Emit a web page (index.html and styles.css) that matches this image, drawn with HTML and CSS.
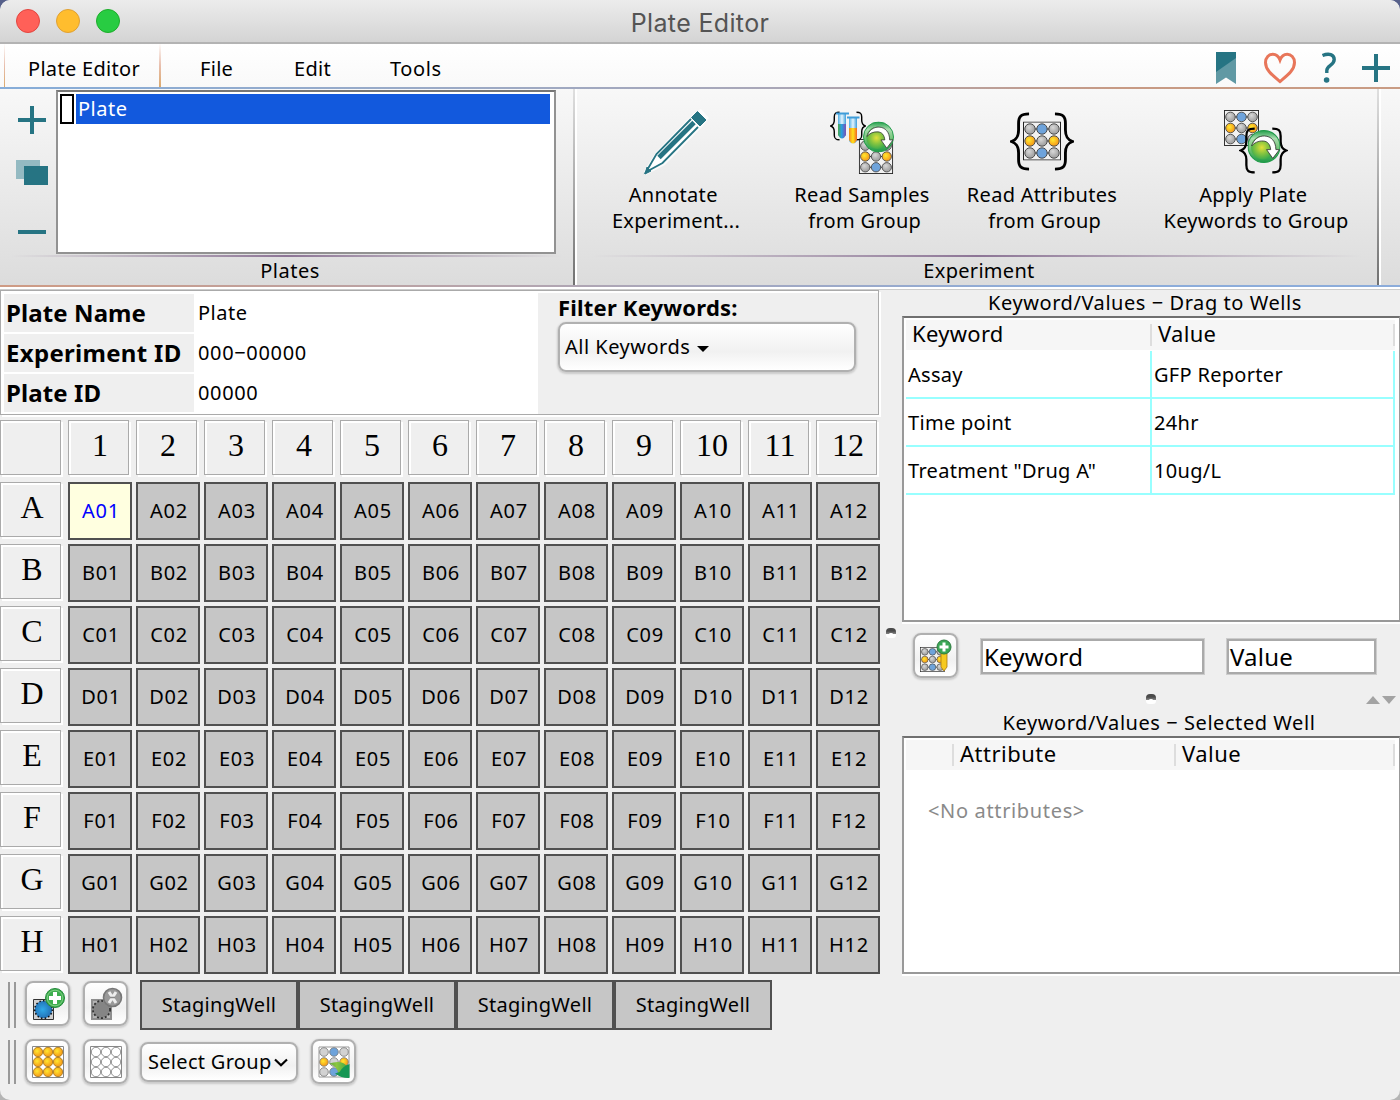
FILE: index.html
```html
<!DOCTYPE html>
<html lang="en">
<head>
<meta charset="utf-8">
<title>Plate Editor</title>
<link rel="stylesheet" href="styles.css">
</head>
<body>
<svg class="defs" width="0" height="0" aria-hidden="true">
  <defs>
    <radialGradient id="grey" cx=".4" cy=".35"><stop offset="0" stop-color="#d8d8d8"/><stop offset="1" stop-color="#a9a9a9"/></radialGradient>
    <radialGradient id="gold" cx=".4" cy=".4"><stop offset="0" stop-color="#ffe92e"/><stop offset="1" stop-color="#f7a41d"/></radialGradient>
    <radialGradient id="green" cx=".45" cy=".5" r=".55"><stop offset="0" stop-color="#e2e03a"/><stop offset=".45" stop-color="#8cc63f"/><stop offset="1" stop-color="#2fa84f"/></radialGradient>
    <linearGradient id="ring" x1="0" y1="0" x2="0" y2="1"><stop offset="0" stop-color="#23a04b"/><stop offset=".25" stop-color="#a9dcae"/><stop offset=".6" stop-color="#6cc070"/><stop offset="1" stop-color="#1f9a48"/></linearGradient>
    <radialGradient id="blue" cx=".45" cy=".5"><stop offset="0" stop-color="#2fa9e8"/><stop offset="1" stop-color="#2473b8"/></radialGradient>
    <linearGradient id="tubeA"><stop offset="0" stop-color="#4aa84e"/><stop offset=".45" stop-color="#2a9fe0"/><stop offset="1" stop-color="#7a4fb5"/></linearGradient>
    <linearGradient id="tubeB"><stop offset="0" stop-color="#f58a1e"/><stop offset=".5" stop-color="#ffe21a"/><stop offset="1" stop-color="#f0641e"/></linearGradient>
    <linearGradient id="glass"><stop offset="0" stop-color="#4fb0e6"/><stop offset=".5" stop-color="#e4f4fd"/><stop offset="1" stop-color="#3d9edb"/></linearGradient>
    <linearGradient id="leaf" x1="0" y1="0" x2="1" y2="0"><stop offset="0" stop-color="#5fa83a"/><stop offset=".4" stop-color="#8cc63f"/><stop offset="1" stop-color="#3fa648"/></linearGradient>
    <symbol id="plate" viewBox="0 0 38 39">
      <rect x=".5" y=".5" width="37" height="38" fill="#f2f2f2" stroke="#222"/>
      <path d="M2 7.500h34M2 19.500h34M2 31.500h34" stroke="#222"/>
      <g stroke="#4a4a4a" stroke-width="1">
        <circle cx="7" cy="7.500" r="5.200" fill="url(#grey)"/><circle cx="19" cy="7.500" r="5.200" fill="#6ea3db"/><circle cx="31" cy="7.500" r="5.200" fill="url(#grey)"/>
        <circle cx="7" cy="19.500" r="5.200" fill="url(#gold)"/><circle cx="19" cy="19.500" r="5.200" fill="url(#grey)"/><circle cx="31" cy="19.500" r="5.200" fill="url(#gold)"/>
        <circle cx="7" cy="31.500" r="5.200" fill="url(#grey)"/><circle cx="19" cy="31.500" r="5.200" fill="#6ea3db"/><circle cx="31" cy="31.500" r="5.200" fill="url(#grey)"/>
      </g>
    </symbol>
    <symbol id="refresh" viewBox="0 0 32 32">
      <circle cx="16" cy="16" r="15.500" fill="url(#ring)" stroke="#1f9a48"/>
      <circle cx="15" cy="17" r="11.500" fill="url(#green)"/>
      <path d="M4 15.500C6 9 11 5.500 16.500 5.800C23 6 27.500 11 27.500 19h3.500l-6.500 8.500l-6-8.500h4C22 14 19.500 11 15.500 10.700C10.500 10.300 6.500 12.500 4 15.500z" fill="#fff" stroke="#333" stroke-width=".8"/>
    </symbol>
    <symbol id="braceL" viewBox="0 0 21 62">
      <path d="M20 2C11 2 9 5 9 12V19C9 26 7 29 1.500 31C7 33 9 36 9 43V50C9 57 11 60 20 60" fill="none" stroke="#000" stroke-width="3"/>
    </symbol>
    <symbol id="plus" viewBox="0 0 28 28"><path d="M14 0V28M0 14H28" stroke="#267483" stroke-width="4"/></symbol>
  </defs>
</svg>

<header class="titlebar">
  <div class="lights"><i class="light red"></i><i class="light amber"></i><i class="light green"></i></div>
  <h1>Plate Editor</h1>
</header>

<nav class="menubar">
  <span class="tab">Plate Editor</span>
  <span class="menu m-file">File</span>
  <span class="menu m-edit">Edit</span>
  <span class="menu m-tools">Tools</span>
  <div class="menu-icons">
    <svg width="22" height="34" viewBox="0 0 22 34"><path d="M1 1H21V33L11 26.500L1 33z" fill="#6099a4"/><path d="M1 1H21V7L1 21z" fill="#267483"/></svg>
    <svg width="34" height="32" viewBox="0 0 34 32"><path d="M17 29.500C9 23 2.500 18 2.500 10.500C2.500 5.500 6 2.300 9.800 2.300C13 2.300 15.500 4 17 8C18.500 4 21 2.300 24.200 2.300C28 2.300 31.500 5.500 31.500 10.500C31.500 18 25 23 17 29.500z" fill="none" stroke="#e8765a" stroke-width="3"/></svg>
    <svg width="16" height="32" viewBox="0 0 16 32"><path d="M1.500 3.500C8 .8 13.200 2.500 13.200 7.500C13.200 13.500 5.800 13 5.800 18.500V21" fill="none" stroke="#267483" stroke-width="3.400"/><circle cx="5.600" cy="28" r="2.800" fill="#267483"/></svg>
    <svg width="28" height="28"><use href="#plus"/></svg>
  </div>
</nav>

<section class="ribbon">
  <div class="group plates">
    <div class="group-body">
      <div class="plate-tools">
        <svg width="28" height="28"><use href="#plus"/></svg>
        <svg width="32" height="25" viewBox="0 0 32 25"><path d="M0 0h24v19H0z" fill="#94bac2"/><path d="M8 6h24v19H8z" fill="#267483"/></svg>
        <svg width="28" height="4"><path d="M0 2h28" stroke="#267483" stroke-width="4"/></svg>
      </div>
      <div class="listbox"><div class="list-row"><i class="swatch"></i><span class="list-name">Plate</span></div></div>
    </div>
    <div class="group-label">Plates</div>
  </div>
  <div class="group experiment">
    <div class="group-body">
      <div class="action annotate">
        <svg width="64" height="64" viewBox="0 0 64 64">
          <path d="M49 3L57 -2L65 7L59 15L21 54L2 64L0 60L12 41z" fill="#fff" opacity=".7"/>
          <path d="M47 8L12.500 43L2 61L18.500 52L54 16" fill="#fff" stroke="#267483" stroke-width="1.800"/>
          <path d="M50 11.500L15 46.500" stroke="#267483" stroke-width="4.800"/>
          <path d="M53.500 .5L62 9L56 15L47.500 6.500z" fill="#267483" stroke="#267483" stroke-linejoin="round"/>
          <path d="M1 63L3 56L7 60z" fill="#267483" stroke="#267483" stroke-linejoin="round"/>
        </svg>
        <span>Annotate&nbsp;<br>Experiment...</span>
      </div>
      <div class="action samples">
        <svg width="66" height="64" viewBox="0 0 66 64">
          <use href="#plate" x="29.500" y="29" width="35" height="35"/>
          <use href="#braceL" x="1" y="0" width="10" height="32"/>
          <g transform="translate(37 0) scale(-1 1)"><use href="#braceL" width="10" height="32"/></g>
          <path d="M9 4h8v21q-4 7-8 0z" fill="url(#glass)"/><path d="M9 14h8v11q-4 7-8 0z" fill="url(#tubeA)"/><path d="M7 3.500h13" stroke="#3f9cd8" stroke-width="2"/>
          <path d="M20 8h8v23q-4 6-8 0z" fill="url(#glass)"/><path d="M20 18h8v12q-4 7-8 0z" fill="url(#tubeB)"/><path d="M18 7.500h12.500" stroke="#3f9cd8" stroke-width="2"/>
          <use href="#refresh" x="34" y="11.500" width="31" height="31"/>
        </svg>
        <span>Read Samples<br>&nbsp;from Group</span>
      </div>
      <div class="action attributes">
        <svg width="64" height="64" viewBox="0 0 64 64">
          <use href="#plate" x="13" y="10.500" width="38" height="39"/>
          <use href="#braceL" x="0" y="0" width="20" height="61"/>
          <g transform="translate(64 0) scale(-1 1)"><use href="#braceL" width="20" height="61"/></g>
        </svg>
        <span>Read Attributes<br>&nbsp;from Group</span>
      </div>
      <div class="action apply">
        <svg width="66" height="64" viewBox="0 0 66 64">
          <use href="#plate" x="1" y="0" width="35" height="36"/>
          <use href="#braceL" x="16" y="17" width="17" height="47"/>
          <g transform="translate(65 17) scale(-1 1)"><use href="#braceL" width="17" height="47"/></g>
          <use href="#refresh" x="24.500" y="20" width="33" height="33"/>
        </svg>
        <span>Apply Plate&nbsp;<br>Keywords to Group</span>
      </div>
    </div>
    <div class="group-label">Experiment</div>
  </div>
</section>

<main class="workspace">
  <section class="plate-pane">
    <div class="info">
      <dl class="fields">
        <dt>Plate Name</dt><dd>Plate</dd>
        <dt>Experiment ID</dt><dd class="num">000−00000</dd>
        <dt>Plate ID</dt><dd class="num">00000</dd>
      </dl>
      <div class="filter">
        <label>Filter Keywords:</label>
        <button class="mac filter-select"><span>All Keywords</span><i class="caret"></i></button>
      </div>
    </div>
    <div class="wells">
      <b></b><b>1</b><b>2</b><b>3</b><b>4</b><b>5</b><b>6</b><b>7</b><b>8</b><b>9</b><b>10</b><b>11</b><b>12</b>
      <b>A</b><i class="selected">A01</i><i>A02</i><i>A03</i><i>A04</i><i>A05</i><i>A06</i><i>A07</i><i>A08</i><i>A09</i><i>A10</i><i>A11</i><i>A12</i>
      <b>B</b><i>B01</i><i>B02</i><i>B03</i><i>B04</i><i>B05</i><i>B06</i><i>B07</i><i>B08</i><i>B09</i><i>B10</i><i>B11</i><i>B12</i>
      <b>C</b><i>C01</i><i>C02</i><i>C03</i><i>C04</i><i>C05</i><i>C06</i><i>C07</i><i>C08</i><i>C09</i><i>C10</i><i>C11</i><i>C12</i>
      <b>D</b><i>D01</i><i>D02</i><i>D03</i><i>D04</i><i>D05</i><i>D06</i><i>D07</i><i>D08</i><i>D09</i><i>D10</i><i>D11</i><i>D12</i>
      <b>E</b><i>E01</i><i>E02</i><i>E03</i><i>E04</i><i>E05</i><i>E06</i><i>E07</i><i>E08</i><i>E09</i><i>E10</i><i>E11</i><i>E12</i>
      <b>F</b><i>F01</i><i>F02</i><i>F03</i><i>F04</i><i>F05</i><i>F06</i><i>F07</i><i>F08</i><i>F09</i><i>F10</i><i>F11</i><i>F12</i>
      <b>G</b><i>G01</i><i>G02</i><i>G03</i><i>G04</i><i>G05</i><i>G06</i><i>G07</i><i>G08</i><i>G09</i><i>G10</i><i>G11</i><i>G12</i>
      <b>H</b><i>H01</i><i>H02</i><i>H03</i><i>H04</i><i>H05</i><i>H06</i><i>H07</i><i>H08</i><i>H09</i><i>H10</i><i>H11</i><i>H12</i>
    </div>
  </section>
  <div class="divider"><i class="grip"></i></div>
  <section class="side">
    <h2 class="drag-title">Keyword/Values − Drag to Wells</h2>
    <div class="table keywords">
      <div class="thead"><span>Keyword</span><span>Value</span></div>
      <div class="tr"><span>Assay</span><span>GFP Reporter</span></div>
      <div class="tr"><span>Time point</span><span>24hr</span></div>
      <div class="tr"><span>Treatment "Drug A"</span><span>10ug/L</span></div>
    </div>
    <div class="add-row">
      <button class="mac square">
        <svg width="34" height="34" viewBox="0 0 34 34">
          <use href="#plate" x="1" y="8" width="25" height="25"/>
          <path d="M22 13h6v15l-3 4l-3-4z" fill="#f6c91f" stroke="#a87a10" stroke-width=".8"/>
          <circle cx="25" cy="8" r="7" fill="#3aa655" stroke="#2b7a3d"/><path d="M25 3.500v9M20.500 8h9" stroke="#fff" stroke-width="3"/>
        </svg>
      </button>
      <div class="input kw">Keyword</div>
      <div class="input val">Value</div>
    </div>
    <div class="splitter">
      <i class="grip"></i>
      <svg width="30" height="8" viewBox="0 0 30 8"><path d="M0 8L7 0L14 8zM16 0H30L23 8z" fill="#a3a3a3"/></svg>
    </div>
    <h2 class="selected-title">Keyword/Values − Selected Well</h2>
    <div class="table attrs">
      <div class="thead"><span></span><span>Attribute</span><span>Value</span></div>
      <p class="empty">&lt;No attributes&gt;</p>
    </div>
  </section>
</main>

<footer class="toolbars">
  <div class="toolbar staging">
    <i class="handle"></i>
    <button class="mac square">
      <svg width="34" height="34" viewBox="0 0 34 34"><path d="M2.500 12.500h20v20h-20z" fill="#d0d0d0" stroke="#333"/><circle cx="12.500" cy="22.500" r="8.800" fill="url(#blue)" stroke="#111" stroke-width="1.500" stroke-dasharray="1.500 2.200"/><circle cx="24" cy="11" r="9.500" fill="#3fae4f" stroke="#23883b"/><circle cx="24" cy="11" r="7.800" fill="none" stroke="#8fd58f" stroke-width=".8"/><path d="M24 5v12M18 11h12" stroke="#fff" stroke-width="4"/></svg>
    </button>
    <button class="mac square">
      <svg width="34" height="34" viewBox="0 0 34 34"><path d="M3 13h19v19H3z" fill="#b5b5b5" stroke="#8e8e8e" stroke-width="2"/><circle cx="12.500" cy="22.500" r="8.600" fill="#858585" stroke="#333" stroke-width="1.800" stroke-dasharray="2 2"/><circle cx="23.500" cy="10.500" r="9" fill="#999" stroke="#777" stroke-width="1.600"/><path d="M20 5l7 11M27 5l-7 11" stroke="#eee" stroke-width="3"/><path d="M21 10.500h5" stroke="#888" stroke-width="1.500"/></svg>
    </button>
    <div class="staging-wells"><span>StagingWell</span><span>StagingWell</span><span>StagingWell</span><span>StagingWell</span></div>
  </div>
  <div class="toolbar groups">
    <i class="handle"></i>
    <button class="mac square">
      <svg width="34" height="34" viewBox="0 0 34 34"><path d="M1.500 1.500h31v31h-31z" fill="#fff" stroke="#888"/><g fill="url(#gold)" stroke="#a06d10" stroke-width=".8"><circle cx="7" cy="7" r="4.700"/><circle cx="17" cy="7" r="4.700"/><circle cx="27" cy="7" r="4.700"/><circle cx="7" cy="17" r="4.700"/><circle cx="17" cy="17" r="4.700"/><circle cx="27" cy="17" r="4.700"/><circle cx="7" cy="27" r="4.700"/><circle cx="17" cy="27" r="4.700"/><circle cx="27" cy="27" r="4.700"/></g></svg>
    </button>
    <button class="mac square">
      <svg width="34" height="34" viewBox="0 0 34 34"><path d="M1.500 1.500h31v31h-31z" fill="#fff" stroke="#888"/><g fill="#fff" stroke="#777" stroke-width=".8"><circle cx="7" cy="7" r="4.700"/><circle cx="17" cy="7" r="4.700"/><circle cx="27" cy="7" r="4.700"/><circle cx="7" cy="17" r="4.700"/><circle cx="17" cy="17" r="4.700"/><circle cx="27" cy="17" r="4.700"/><circle cx="7" cy="27" r="4.700"/><circle cx="17" cy="27" r="4.700"/><circle cx="27" cy="27" r="4.700"/></g></svg>
    </button>
    <button class="mac group-select"><span>Select Group</span><svg width="14" height="9" viewBox="0 0 14 9"><path d="M1 1.500L7 7.200L13 1.500" fill="none" stroke="#000" stroke-width="2.200"/></svg></button>
    <button class="mac square">
      <svg width="34" height="34" viewBox="0 0 34 34"><path d="M2 2h30v30H2z" fill="#fff" stroke="#999"/><g stroke="#777" stroke-width=".8" fill="#d2d2d2"><circle cx="7" cy="7" r="4.300"/><circle cx="17" cy="7" r="4.300" fill="#6ea3db"/><circle cx="27" cy="7" r="4.300"/><circle cx="7" cy="17" r="4.300" fill="url(#gold)"/><circle cx="17" cy="17" r="4.300"/><circle cx="27" cy="17" r="4.300" fill="url(#gold)"/><circle cx="7" cy="27" r="4.300"/><circle cx="17" cy="27" r="4.300" fill="#6ea3db"/></g><path d="M12 18.500Q25 14 31 22L22 29Q20 21 12 18.500z" fill="url(#leaf)"/><path d="M32.500 19V33Q25 33.500 18 28.500L22.500 27Q26 21 32.500 19z" fill="#169653"/></svg>
    </button>
  </div>
</footer>
</body>
</html>
```
FILE: styles.css
```css
* { box-sizing: border-box; }
html { background: linear-gradient(#56608a, #56608a 60%, #b4b4b4 80%); }
body {
  margin: 0; width: 1400px; height: 1100px; overflow: hidden;
  background: #efefef; border-radius: 10px; color: #000;
  font: 20px/26px "Noto Sans", "Open Sans", sans-serif; letter-spacing: .3px;
  display: flex; flex-direction: column;
}
.defs { position: absolute; }
svg { display: block; flex: none; overflow: visible; }
h1, h2, dl, dd, p { margin: 0; }
i, b { font-style: normal; font-weight: 400; }

.titlebar {
  height: 44px; flex: none; display: grid; grid-template-columns: 120px 1fr 120px; align-items: center;
  background: linear-gradient(#ececec, #d4d4d4); border-bottom: 2px solid #b3b3b3; border-radius: 10px 10px 0 0;
}
.lights { display: flex; gap: 16px; padding-left: 16px; }
.light { width: 24px; height: 24px; border-radius: 50%; border: 1px solid; }
.red { background: #ff6058; border-color: #e2453f; }
.amber { background: #ffbd2e; border-color: #dfa033; }
.light.green { background: #28cc42; border-color: #1dad2b; }
.titlebar h1 { text-align: center; font: 400 25px/30px Inter, sans-serif; letter-spacing: .35px; color: #545454; padding-top: 3px; }

.menubar {
  height: 45px; flex: none; display: flex; align-items: center;
  background: linear-gradient(#fff, #f9f9f9);
  border-bottom: 2px solid; border-image: linear-gradient(90deg, #86add9, #a9a7b8 55%, #c79a84 80%, #c99c84) 1;
}
.tab {
  width: 157px; height: 43px; margin-left: 4px; padding: 12px 0 0 23px; white-space: nowrap;
  border: solid; border-width: 0 2px 0 1px; border-image: linear-gradient(#fff, #e8bfae 50%, #dba869) 1;
}
.menu { padding-top: 6px; }
.m-file { margin-left: 39px; width: 94px; }
.m-edit { width: 96px; }
.m-tools { letter-spacing: .6px; }
.menu-icons { margin-left: auto; display: flex; align-items: center; padding: 4px 10px 0 0; }
.menu-icons svg:nth-child(2) { margin-left: 26px; }
.menu-icons svg:nth-child(3) { margin-left: 24px; }
.menu-icons svg:nth-child(4) { margin-left: 25px; }

.ribbon {
  height: 198px; flex: none; display: flex; background: linear-gradient(#f8f8f8, #dcdcdc);
  border-bottom: 2px solid; border-image: linear-gradient(90deg, #cf9b84, #b3a5b0 38%, #8cacda 75%) 1;
}
.group { display: flex; flex-direction: column; border-right: 2px solid; border-image: linear-gradient(#e0e0e0, #707070) 1; box-shadow: 2px 0 #fff; }
.plates { width: 575px; }
.experiment { width: 804px; padding-left: 2px; }
.group-body { height: 166px; display: flex; }
.group-label {
  height: 30px; text-align: center; padding-top: 1px;
  border-top: 2px solid; border-image: linear-gradient(90deg, transparent 2%, #8d7596 50%, transparent 98%) 1;
}
.plates .group-label { padding-left: 7px; letter-spacing: .5px; }
.experiment .group-label { padding-left: 4px; }
.plate-tools { width: 56px; padding: 17px 0 0 16px; }
.plate-tools svg:nth-child(1) { margin-left: 2px; }
.plate-tools svg:nth-child(2) { margin-top: 26px; }
.plate-tools svg:nth-child(3) { margin: 45px 0 0 2px; }
.listbox { width: 500px; height: 164px; margin-top: 1px; background: #fff; border: 2px solid #929292; border-top-color: #767676; padding: 2px 4px 0 2px; }
.list-row { display: flex; gap: 2px; height: 30px; }
.swatch { width: 14px; border: 2px solid #000; }
.list-name { flex: 1; background: #1259dd; color: #fff; padding: 2px 0 0 2px; letter-spacing: .5px; }
.action { display: flex; flex-direction: column; align-items: center; padding-top: 21px; line-height: 26px; white-space: nowrap; }
.action span { text-align: center; margin-top: 8px; }
.annotate, .attributes { padding-top: 22px; }
.annotate span, .attributes span { margin-top: 7px; }
.annotate { width: 198px; }
.samples { width: 174px; }
.attributes { width: 186px; }
.apply { width: 242px; }

.workspace { height: 687px; flex: none; display: grid; grid-template-columns: 880px 22px 498px; border-top: 2px solid #fff; box-shadow: inset 0 1px #ccc; }
.plate-pane { padding-top: 1px; }
.info { width: 879px; height: 125px; border: 1px solid #aaa; box-shadow: inset 2px 2px #fff, 2px 2px #fff; display: flex; }
.fields { width: 537px; padding: 3px; display: grid; grid-template-columns: 190px 1fr; grid-auto-rows: 38px; row-gap: 2px; background: #fff; }
.fields dt { background: #efefef; font-size: 24px; font-weight: 700; line-height: 38px; padding-left: 2px; letter-spacing: .1px; }
.fields dt:nth-of-type(2) { letter-spacing: .3px; }
.fields dd { line-height: 37px; padding-left: 4px; letter-spacing: .5px; }
.fields .num { letter-spacing: .65px; }
.filter { padding: 3px 0 0 19px; }
.filter label { display: block; font-weight: 700; font-size: 22px; letter-spacing: .2px; line-height: 27px; padding-left: 1px; }
.mac {
  font: inherit; letter-spacing: inherit; color: #000; padding: 0; display: flex; align-items: center; flex: none;
  background: linear-gradient(#fff, #f1f1f1 60%, #fff); border: 2px solid #b0b0b0; border-radius: 8px;
  box-shadow: 0 1px 2px 1px rgba(0,0,0,.15);
}
.square { width: 45px; height: 45px; margin: 1px 12px 0 1px; justify-content: center; }
.filter-select { width: 298px; height: 50px; margin: 1px 0 0 1px; padding-left: 5px; gap: 7px; letter-spacing: .5px; }
.caret { border: 6px solid transparent; border-top-color: #000; border-bottom: 0; margin-top: 3px; }
.wells { margin-top: 5px; display: grid; grid-template-columns: repeat(13, 64px); grid-auto-rows: 58px; gap: 4px; }
.wells b {
  width: 61px; height: 55px; border: 1px solid #aaa; box-shadow: inset 2px 2px #fff, 2px 2px #fff;
  font: 32px/49px "Liberation Serif", serif; letter-spacing: 0; text-align: center; padding-left: 3px;
}
.wells i { background: #c6c6c6; border: 2px solid #505050; line-height: 54px; text-align: center; letter-spacing: .7px; padding-left: 2px; }
.wells .selected { background: #ffffe0; color: #00f; }

.divider { padding: 339px 0 0 6px; }
.grip {
  display: block; width: 10px; height: 10px;
  background: radial-gradient(circle at 5px 8px, #fff 2.5px, transparent 3.5px), linear-gradient(#4a4a4a 3px, #888 6px, #fff 6px);
  border-radius: 4px 4px 3px 3px;
}
.side { display: flex; flex-direction: column; min-width: 0; }
.side h2 { font-size: 20px; font-weight: 400; text-align: center; white-space: nowrap; line-height: 26px; letter-spacing: .56px; }
.drag-title { margin-top: 1px; padding-right: 12px; }
.table { background: #fff; border: 2px solid #999; border-top-color: #707070; border-right-width: 1px; padding: 2px 4px 0 2px; box-shadow: 0 2px #fff; }
.keywords { height: 306px; }
.thead { display: grid; height: 30px; background: #f6f6f6; font-size: 22px; line-height: 27px; margin-bottom: 1px; }
.thead span { padding-left: 6px; background: linear-gradient(#ddd, #ddd) right 4px / 2px 22px no-repeat; }
.keywords .thead, .tr { grid-template-columns: 246px 1fr; }
.tr { display: grid; height: 48px; line-height: 48px; }
.tr span { padding-left: 2px; height: 48px; border: 2px solid #98ffff; border-width: 0 2px 2px 0; }
.add-row { display: flex; height: 72px; padding: 10px 0 0 10px; }
.add-row .square { margin-right: 0; }
.input { height: 37px; margin-top: 6px; background: #fff; border: 3px solid #aaa; outline: 1px solid #ccc; outline-offset: -1px; font-size: 24px; line-height: 31px; padding-left: 1px; letter-spacing: .2px; }
.kw { width: 225px; margin-left: 22px; }
.val { width: 151px; margin-left: 21px; }
.splitter { display: flex; align-items: center; height: 10px; padding-left: 244px; }
.splitter svg { margin: 1px 0 0 210px; }
.selected-title { margin: 6px 0 0; padding-left: 16px; }
.attrs { height: 238px; }
.attrs .thead { grid-template-columns: 48px 222px 1fr; }
.attrs .thead span { letter-spacing: .5px; }
.empty { color: #8a8a8a; padding: 27px 0 0 22px; letter-spacing: .65px; }

.toolbars { padding: 6px 0 0 8px; }
.toolbar { display: flex; align-items: flex-start; height: 50px; }
.groups { margin-top: 8px; }
.handle { width: 8px; height: 46px; border: 2px solid #999; border-width: 0 2px; margin: 2px 8px 0 0; }
.groups .handle { height: 44px; }
.staging-wells { display: flex; }
.staging-wells span { width: 158px; height: 50px; background: #c6c6c6; border: 2px solid #505050; line-height: 46px; text-align: center; }
.group-select { width: 158px; height: 40px; margin: 4px 12px 0 0; padding-left: 6px; gap: 2px; }
```
